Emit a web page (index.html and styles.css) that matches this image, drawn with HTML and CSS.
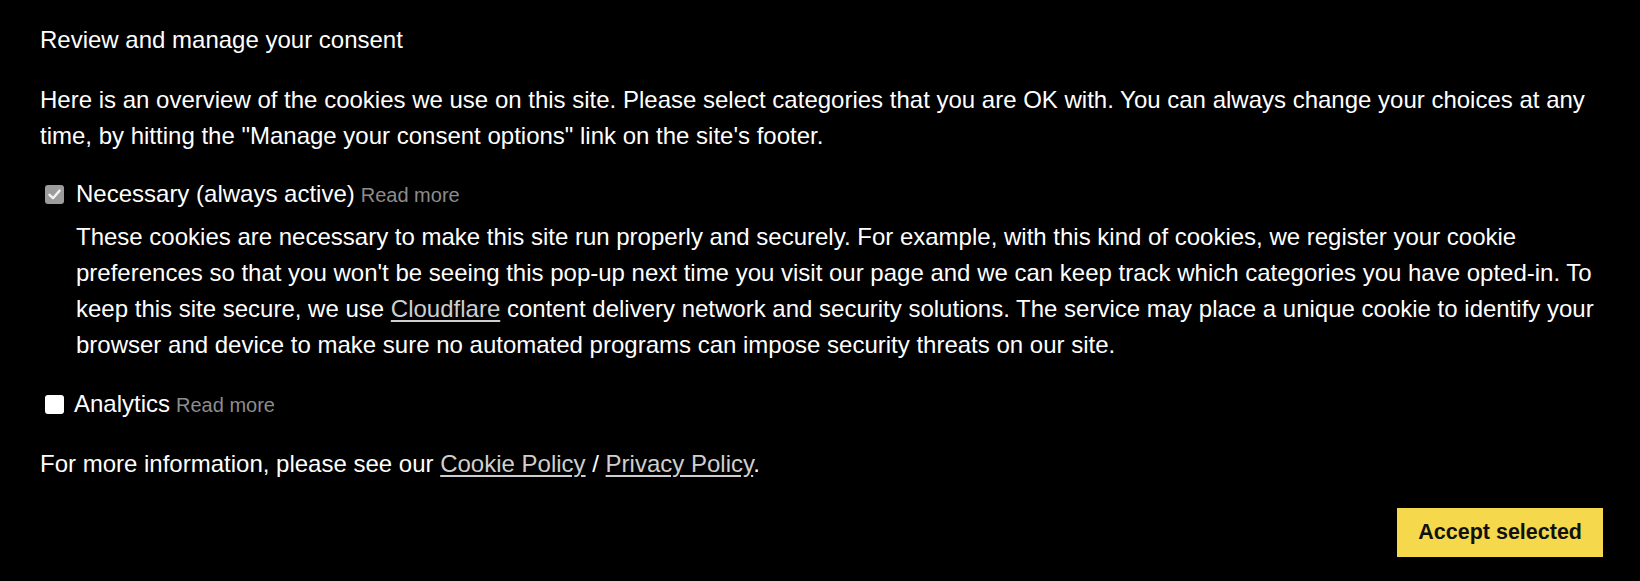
FILE: index.html
```html
<!DOCTYPE html>
<html lang="en">
<head>
<meta charset="utf-8">
<title>Review and manage your consent</title>
<link rel="stylesheet" href="styles.css">
</head>
<body>
<div class="consent">
  <h2 class="consent__title">Review and manage your consent</h2>
  <p class="consent__intro">Here is an overview of the cookies we use on this site. Please select categories that you are OK with. You can always change your choices at any time, by hitting the "Manage your consent options" link on the site's footer.</p>

  <div class="category">
    <div class="category__head">
      <span class="check check--locked"><svg viewBox="0 0 19 19" width="19" height="19"><path d="M4.5 9.8 L8 13.2 L14.6 5.6" fill="none" stroke="#f2f2f2" stroke-width="2.4" stroke-linecap="round" stroke-linejoin="round"/></svg></span>
      <span class="category__name">Necessary (always active)</span>
      <a class="readmore" href="#">Read more</a>
    </div>
    <p class="category__desc">These cookies are necessary to make this site run properly and securely. For example, with this kind of cookies, we register your cookie<br>preferences so that you won't be seeing this pop-up next time you visit our page and we can keep track which categories you have opted-in. To keep this site secure, we use <a class="link" href="#">Cloudflare</a> content delivery network and security solutions. The service may place a unique cookie to identify your browser and device to make sure no automated programs can impose security threats on our site.</p>
  </div>

  <div class="category category--spaced">
    <div class="category__head category__head--tight">
      <span class="check"></span>
      <span class="category__name">Analytics</span>
      <a class="readmore" href="#">Read more</a>
    </div>
  </div>

  <p class="consent__more">For more information, please see our <a class="link" href="#">Cookie Policy</a> / <a class="link" href="#">Privacy Policy</a>.</p>

  <div class="consent__actions">
    <button class="btn" type="button">Accept selected</button>
  </div>
</div>
</body>
</html>
```
FILE: styles.css
```css
html, body {
  margin: 0;
  padding: 0;
  background: #000;
}

body {
  font-family: "Liberation Sans", Arial, sans-serif;
  font-size: 24px;
  line-height: 36px;
  color: #fff;
}

.consent {
  padding: 22px 37px 24px 40px;
}

.consent__title {
  margin: 0 0 24px;
  font-size: 24px;
  font-weight: normal;
  line-height: 36px;
}

.consent__intro {
  margin: 0 0 22px;
}

.category__head {
  display: flex;
  align-items: center;
  height: 36px;
}

.category__name {
  margin-left: 12px;
  margin-right: 6px;
}

.category__head--tight .category__name {
  margin-left: 10px;
}

.check {
  box-sizing: border-box;
  display: inline-flex;
  width: 19px;
  height: 19px;
  margin-left: 5px;
  border-radius: 3px;
  background: #fff;
}

.check--locked {
  background: #9c9c9c;
}

.readmore {
  font-size: 20px;
  color: #8c8c8c;
  text-decoration: none;
  padding-top: 2px;
}

.category__desc {
  margin: 7px 0 0 36px;
}

.category--spaced {
  margin-top: 23px;
}

.link {
  color: #cfcfcf;
  text-decoration: underline;
  text-underline-offset: 3px;
}

.consent__more {
  margin: 24px 0 0;
}

.consent__actions {
  display: flex;
  justify-content: flex-end;
  margin-top: 26px;
}

.btn {
  font-family: "Liberation Sans", Arial, sans-serif;
  font-size: 21.5px;
  font-weight: bold;
  line-height: 25px;
  color: #111;
  background: #f5d84b;
  border: none;
  border-radius: 0;
  padding: 12px 21px;
  cursor: pointer;
}
```
